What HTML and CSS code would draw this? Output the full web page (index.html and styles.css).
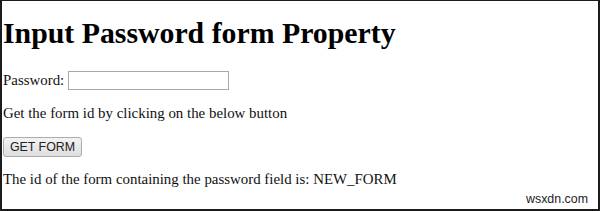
FILE: index.html
```html
<!DOCTYPE html>
<html lang="en">
<head>
    <meta charset="UTF-8">
    <title>Input Password form Property</title>
    <link rel="stylesheet" href="styles.css">
</head>
<body>
    <div class="page">
        <h1 class="title">Input Password form Property</h1>

        <!-- password field -->
        <form id="NEW_FORM" class="pass-row">
            <label for="pass">Password:</label>
            <input type="password" id="pass" class="pass-input">
        </form>

        <p class="hint">Get the form id by clicking on the below button</p>

        <button class="get-btn" type="button">GET FORM</button>

        <p class="result">The id of the form containing the password field is: NEW_FORM</p>

        <span class="mark">wsxdn.com</span>
    </div>
</body>
</html>
```

FILE: styles.css
```css
body {
    margin: 0;
    background: #fff;
}

.page {
    position: relative;
    box-sizing: border-box;
    width: 600px;
    height: 211px;
    border: 2px solid #1c1c1c;
    border-top-width: 1px;
    padding: 0 0 0 1px;
    font-family: "Liberation Serif", "Times New Roman", serif;
    font-size: 14.9px;
    color: #111;
}

.title {
    margin: 15px 0 21px;
    font-size: 29.8px;
    line-height: 34px;
    font-weight: bold;
    color: #000;
}

.pass-row {
    display: flex;
    align-items: center;
    gap: 4px;
    height: 19px;
    margin: 0;
    line-height: 19px;
}

.pass-input {
    box-sizing: border-box;
    width: 161px;
    height: 19px;
    margin: 0;
    border: 1px solid #a9a9a9;
    padding: 0;
    background: #fff;
}

.hint {
    margin: 15px 0 0;
    line-height: 17px;
}

.get-btn {
    display: block;
    box-sizing: border-box;
    width: 79px;
    height: 20px;
    margin: 15px 0 0;
    padding: 0;
    border: 1px solid #acacac;
    border-radius: 3px;
    background: linear-gradient(#f3f3f3, #dedede);
    font-family: "Liberation Sans", Arial, sans-serif;
    font-size: 12.4px;
    color: #222;
}

.result {
    margin: 14px 0 0;
    line-height: 17px;
}

.mark {
    position: absolute;
    right: 10px;
    bottom: 3px;
    font-family: "Liberation Sans", Arial, sans-serif;
    font-size: 12.4px;
    line-height: 14px;
    color: #222;
}
```
